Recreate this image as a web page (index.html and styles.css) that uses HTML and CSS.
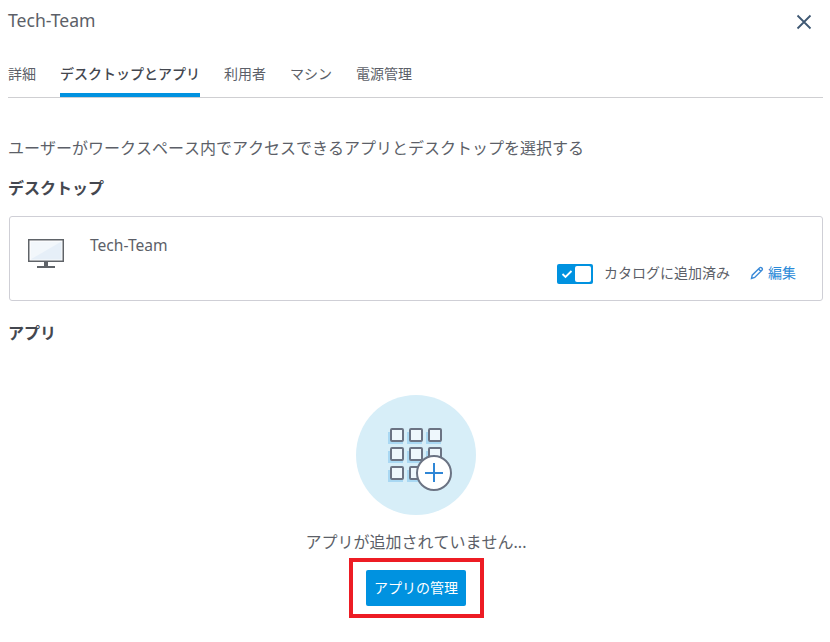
FILE: index.html
```html
<!DOCTYPE html>
<html lang="ja">
<head>
<meta charset="utf-8">
<title>Tech-Team</title>
<link rel="stylesheet" href="styles.css">
</head>
<body>
<div class="panel">
  <header class="head">
    <h1 class="title">Tech-Team</h1>
    <svg class="close" width="16" height="16" viewBox="0 0 16 16"><path d="M1.500 1.500 14.500 14.500M14.500 1.500 1.500 14.500" stroke="#3f5873" stroke-width="1.800" fill="none"/></svg>
  </header>
  <nav class="tabs">
    <span class="tab">詳細</span>
    <span class="tab active">デスクトップとアプリ</span>
    <span class="tab">利用者</span>
    <span class="tab">マシン</span>
    <span class="tab">電源管理</span>
  </nav>
  <p class="intro">ユーザーがワークスペース内でアクセスできるアプリとデスクトップを選択する</p>
  <h2 class="section">デスクトップ</h2>
  <div class="card">
    <svg class="monitor" width="36" height="29" viewBox="0 0 36 29">
      <rect x="0.750" y="0.750" width="34.500" height="21.500" fill="#fff" stroke="#5f6368" stroke-width="1.500"/>
      <path d="M2.500 2.500H33.500V20.500H2.500Z" fill="#f2f7fb"/>
      <path d="M2.500 20.500 33.500 2.500V20.500Z" fill="#e6eff8"/>
      <path d="M16 23H20V27H16Z" fill="#5f6368"/>
      <path d="M9 27H27V29H9Z" fill="#5f6368"/>
    </svg>
    <div class="card-name">Tech-Team</div>
    <div class="card-actions">
      <span class="toggle">
        <svg width="12" height="10" viewBox="0 0 12 10"><path d="M1.500 5 4.500 8 10.500 2" stroke="#fff" stroke-width="1.800" fill="none"/></svg>
        <span class="knob"></span>
      </span>
      <span class="added">カタログに追加済み</span>
      <a class="edit">
        <svg width="14" height="14" viewBox="0 0 14 14"><path d="M1.500 12.500 2.200 9.200 9.500 1.900C10.200 1.200 11 1.200 11.800 1.900 12.600 2.700 12.600 3.500 11.900 4.200L4.700 11.500ZM8.500 3 10.800 5.300" stroke="#3a8ad8" stroke-width="1.400" fill="none"/></svg>
        編集
      </a>
    </div>
  </div>
  <h2 class="section apps">アプリ</h2>
  <div class="empty">
    <div class="circle">
      <svg width="66" height="64" viewBox="0 0 66 64">
        <g fill="#a9d8f3">
          <rect x="0" y="4" width="15" height="12"/><rect x="19" y="4" width="15" height="12"/><rect x="38" y="4" width="15" height="12"/>
          <rect x="0" y="23" width="15" height="12"/><rect x="19" y="23" width="15" height="12"/><rect x="38" y="23" width="15" height="12"/>
          <rect x="0" y="42" width="15" height="12"/><rect x="19" y="42" width="15" height="12"/>
        </g>
        <g fill="#eef7fc" stroke="#6b7383" stroke-width="2">
          <rect x="3" y="1" width="12" height="12" rx="1"/><rect x="22" y="1" width="12" height="12" rx="1"/><rect x="41" y="1" width="12" height="12" rx="1"/>
          <rect x="3" y="20" width="12" height="12" rx="1"/><rect x="22" y="20" width="12" height="12" rx="1"/><rect x="41" y="20" width="12" height="12" rx="1"/>
          <rect x="3" y="39" width="12" height="12" rx="1"/><rect x="22" y="39" width="12" height="12" rx="1"/>
        </g>
        <circle cx="46" cy="45" r="17" fill="#fff" stroke="#6b7383" stroke-width="2"/>
        <path d="M46 35V54M37 45H55" stroke="#2f86d6" stroke-width="2" fill="none"/>
      </svg>
    </div>
    <p class="empty-text">アプリが追加されていません...</p>
    <div class="highlight"><button class="manage">アプリの管理</button></div>
  </div>
</div>
</body>
</html>
```

FILE: styles.css
```css
* { box-sizing: border-box; }
html, body { margin: 0; padding: 0; background: #fff; }
body {
  width: 830px;
  height: 642px;
  overflow: hidden;
  font-family: "Noto Sans", "Noto Sans CJK JP", sans-serif;
  font-kerning: none;
  color: #5c5f68;
}
.panel { padding: 0 7px 0 8px; }
.head { display: flex; justify-content: space-between; align-items: center; height: 40px; }
.title { margin: 0; font-size: 17.6px; font-weight: 400; font-kerning: normal; line-height: 40px; color: #5c5f68; }
.close { margin: 3px 11px 0 0; }
.tabs {
  display: flex;
  gap: 24px;
  margin-top: 18px;
  height: 40px;
  border-bottom: 1px solid #cfcfd2;
}
.tab { font-size: 14px; line-height: 32px; height: 39px; white-space: nowrap; }
.tab.active { color: #44474f; font-weight: 500; border-bottom: 4px solid #0092e0; }
.intro { margin: 38px 0 0; font-size: 16px; line-height: 24px; white-space: nowrap; }
.section { margin: 16px 0 0; font-size: 16px; font-weight: 700; line-height: 24px; color: #44474f; }
.card {
  position: relative;
  display: flex;
  margin: 16px 0 0 1px;
  height: 85px;
  border: 1px solid #cfcfd6;
  border-radius: 3px;
}
.monitor { margin: 22px 0 0 18px; }
.card-name { margin: 17px 0 0 26px; font-size: 15.600px; font-kerning: normal; line-height: 22px; }
.card-actions {
  position: absolute;
  right: 26px;
  bottom: 16px;
  display: flex;
  align-items: center;
  font-size: 14px;
  line-height: 20px;
}
.toggle {
  display: flex;
  align-items: center;
  justify-content: space-between;
  width: 36px;
  height: 20px;
  padding: 2px 2px 2px 4px;
  border-radius: 2px;
  background: #0092e0;
}
.knob { width: 16px; height: 16px; border-radius: 2px; background: #fff; }
.added { margin: -2px 0 0 11px; }
.edit { display: flex; align-items: center; gap: 4px; margin: -2px 0 0 20px; color: #2a8ad8; }
.section.apps { margin-top: 20px; }
.empty { display: flex; flex-direction: column; align-items: center; padding-left: 1px; }
.circle {
  display: flex;
  align-items: center;
  justify-content: center;
  width: 120px;
  height: 120px;
  margin-top: 50px;
  border-radius: 50%;
  background: #d7eef8;
}
.circle svg { margin: 10px 0 0 10px; }
.empty-text { margin: 15px 0 0; font-size: 16px; line-height: 24px; }
.highlight { margin: 4px 0 0 1px; padding: 8px 14px 8px 13px; border: 4px solid #ed1c24; }
.manage {
  display: block;
  width: 100px;
  height: 36px;
  padding: 0 0 2px;
  border: 0;
  border-radius: 2px;
  background: #0092e0;
  color: #fff;
  font: 14px "Noto Sans", "Noto Sans CJK JP", sans-serif;
  font-kerning: none;
}
```
